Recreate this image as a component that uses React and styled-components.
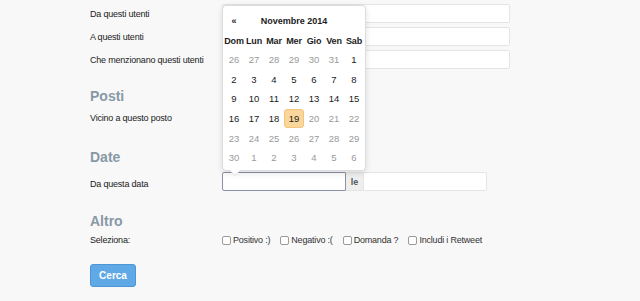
import React from "react";
import styled, { createGlobalStyle } from "styled-components";

const GlobalStyle = createGlobalStyle`
  body {
    margin: 0;
    background: #f8f8f8;
    font-family: "Liberation Sans", Arial, sans-serif;
    color: #222;
  }
`;

const Page = styled.div`
  position: relative;
  width: 640px;
  height: 301px;
  overflow: hidden;
  box-sizing: border-box;
  padding: 4px 0 0 90px;
`;

const Form = styled.form`
  display: flex;
  flex-direction: column;
  width: 520px;
`;

const Row = styled.div`
  display: flex;
  align-items: center;
  height: ${props => props.h || 19}px;
  margin-bottom: ${props => props.mb || 0}px;
  white-space: nowrap;
`;

const Label = styled.label`
  width: 132px;
  flex: none;
  font-size: 9px;
  letter-spacing: -0.2px;
  color: #222;
  white-space: nowrap;
  padding-top: ${props => props.shift || 0}px;
`;

const Input = styled.input`
  box-sizing: border-box;
  flex: none;
  width: ${props => props.w || 288}px;
  height: 19px;
  margin: 0;
  padding: 0 4px;
  background: #fff;
  border: 1px solid ${props => (props.focused ? "#8c90a6" : "#e4e4e4")};
  border-radius: ${props => props.radius || "2px"};
  outline: none;
  font: inherit;
`;

const Addon = styled.span`
  box-sizing: border-box;
  flex: none;
  width: 17px;
  height: 19px;
  display: flex;
  align-items: center;
  justify-content: center;
  background: #eee;
  border-top: 1px solid #e4e4e4;
  border-bottom: 1px solid #e4e4e4;
  font-size: 9px;
  font-weight: bold;
  color: #555;
`;

const Heading = styled.h3`
  margin: ${props => props.mt || 0}px 0 0;
  height: 18px;
  line-height: 18px;
  font-size: 14px;
  font-weight: bold;
  color: #8899a6;
`;

const Checks = styled.div`
  display: flex;
  align-items: center;
  gap: 10px;
  flex: none;
`;

const Check = styled.label`
  display: flex;
  align-items: center;
  gap: 2px;
  font-size: 9px;
  letter-spacing: -0.2px;
  color: #333;
  white-space: nowrap;
`;

const Box = styled.span`
  box-sizing: border-box;
  width: 9px;
  height: 9px;
  background: #fff;
  border: 1px solid #9a9a9a;
  border-radius: 2px;
`;

const Button = styled.button`
  box-sizing: border-box;
  width: 46px;
  height: 23px;
  margin-top: 14px;
  padding: 0;
  background: #60a9e7;
  border: 1px solid #4d95d6;
  border-radius: 3px;
  color: #fff;
  font-family: inherit;
  font-size: 10px;
  font-weight: bold;
`;

const Picker = styled.div`
  position: absolute;
  left: 222px;
  top: 5px;
  box-sizing: border-box;
  width: 144px;
  padding: 4px 1px 2px;
  background: #fff;
  border: 1px solid #dcdcdc;
  border-radius: 4px;
  box-shadow: 0 2px 6px rgba(0, 0, 0, 0.12);

  &::before {
    content: "";
    position: absolute;
    left: 6px;
    bottom: -6px;
    border-left: 6px solid transparent;
    border-right: 6px solid transparent;
    border-top: 6px solid #dcdcdc;
  }

  &::after {
    content: "";
    position: absolute;
    left: 7px;
    bottom: -5px;
    border-left: 5px solid transparent;
    border-right: 5px solid transparent;
    border-top: 5px solid #fff;
  }
`;

const Grid = styled.div`
  display: grid;
  grid-template-columns: repeat(7, 20px);
  grid-template-rows: 21px 19px repeat(6, 19.6px);
  font-size: 9.5px;
`;

const Nav = styled.div`
  display: flex;
  align-items: center;
  justify-content: center;
  font-size: 9px;
  font-weight: bold;
`;

const Title = styled.div`
  grid-column: span 5;
  display: flex;
  align-items: center;
  justify-content: center;
  font-size: 9px;
  font-weight: bold;
`;

const Dow = styled.div`
  display: flex;
  align-items: center;
  justify-content: center;
  font-size: 9px;
  font-weight: bold;
  letter-spacing: -0.2px;
`;

const Day = styled.div`
  box-sizing: border-box;
  display: flex;
  align-items: center;
  justify-content: center;
  color: ${props => (props.muted ? "#999" : "#1a1a1a")};
  background: ${props => (props.today ? "#fbd69c" : "transparent")};
  border: 1px solid ${props => (props.today ? "#f3c47c" : "transparent")};
  border-radius: 3px;
`;

const dows = ["Dom", "Lun", "Mar", "Mer", "Gio", "Ven", "Sab"];

const buildDays = () => {
  const days = [];
  [26, 27, 28, 29, 30, 31].forEach(d => days.push({ d, muted: true }));
  for (let d = 1; d <= 19; d++) days.push({ d, today: d === 19 });
  for (let d = 20; d <= 30; d++) days.push({ d, muted: true });
  for (let d = 1; d <= 6; d++) days.push({ d, muted: true });
  return days;
};

const checks = ["Positivo :)", "Negativo :(", "Domanda ?", "Includi i Retweet"];

const App = () => (
  <Page>
    <GlobalStyle />
    <Form>
      <Row mb={4}>
        <Label shift={1}>Da questi utenti</Label>
        <Input />
      </Row>
      <Row mb={4}>
        <Label shift={1}>A questi utenti</Label>
        <Input />
      </Row>
      <Row>
        <Label shift={1}>Che menzionano questi utenti</Label>
        <Input />
      </Row>
      <Heading mt={18}>Posti</Heading>
      <Row h={26}>
        <Label>Vicino a questo posto</Label>
      </Row>
      <Heading mt={17}>Date</Heading>
      <Row style={{ marginTop: 6 }}>
        <Label shift={4}>Da questa data</Label>
        <Input w={124} focused radius="2px 0 0 2px" />
        <Addon>le</Addon>
        <Input w={124} radius="0 2px 2px 0" />
      </Row>
      <Heading mt={21}>Altro</Heading>
      <Row h={20}>
        <Label>Seleziona:</Label>
        <Checks>
          {checks.map(c => (
            <Check key={c}>
              <Box />
              {c}
            </Check>
          ))}
        </Checks>
      </Row>
      <Button type="button">Cerca</Button>
    </Form>
    <Picker>
      <Grid>
        <Nav>«</Nav>
        <Title>Novembre 2014</Title>
        <Nav />
        {dows.map(d => (
          <Dow key={d}>{d}</Dow>
        ))}
        {buildDays().map((x, i) => (
          <Day key={i} muted={x.muted} today={x.today}>
            {x.d}
          </Day>
        ))}
      </Grid>
    </Picker>
  </Page>
);

export default App;
